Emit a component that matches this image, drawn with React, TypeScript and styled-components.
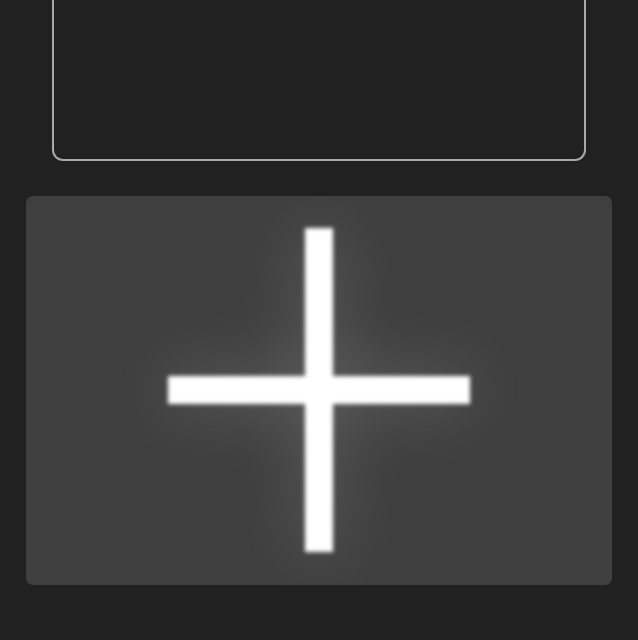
import React from 'react'
import styled, { createGlobalStyle } from 'styled-components'

const GlobalStyle = createGlobalStyle`
  html, body {
    margin: 0;
    padding: 0;
    background: #212121;
    font-family: 'Liberation Sans', Arial, sans-serif;
  }
`

const Page = styled.div`
  display: flex;
  flex-direction: column;
  gap: 35px;
  padding: 0 26px;
  height: 640px;
  box-sizing: border-box;
`

const Frame = styled.div`
  margin: 0 26px;
  height: 161px;
  box-sizing: border-box;
  border: 2px solid #a8a8a8;
  border-top: none;
  border-radius: 0 0 11px 11px;
`

const AddCard = styled.button`
  display: flex;
  align-items: center;
  justify-content: center;
  height: 389px;
  border: none;
  border-radius: 7px;
  background: #3f3f3f;
  padding: 0;
  cursor: pointer;
  overflow: hidden;
`

const PlusIcon = () => (
  <svg width="440" height="389" viewBox="-50 -14 440 389">
    <defs>
      <filter id="soft" x="-20%" y="-20%" width="140%" height="140%">
        <feGaussianBlur stdDeviation="2" />
      </filter>
      <filter id="glow" x="-80%" y="-80%" width="260%" height="260%">
        <feGaussianBlur stdDeviation="32" />
      </filter>
    </defs>
    <g filter="url(#glow)" opacity="0.2" fill="#ffffff">
      <rect x="156" y="18" width="28" height="324" />
      <rect x="19" y="166" width="302" height="28" />
    </g>
    <g filter="url(#soft)" fill="#ffffff">
      <rect x="156" y="18" width="28" height="324" />
      <rect x="19" y="166" width="302" height="28" />
    </g>
  </svg>
)

export default function App() {
  return (
    <>
      <GlobalStyle />
      <Page>
        <Frame />
        <AddCard aria-label="Add">
          <PlusIcon />
        </AddCard>
      </Page>
    </>
  )
}
